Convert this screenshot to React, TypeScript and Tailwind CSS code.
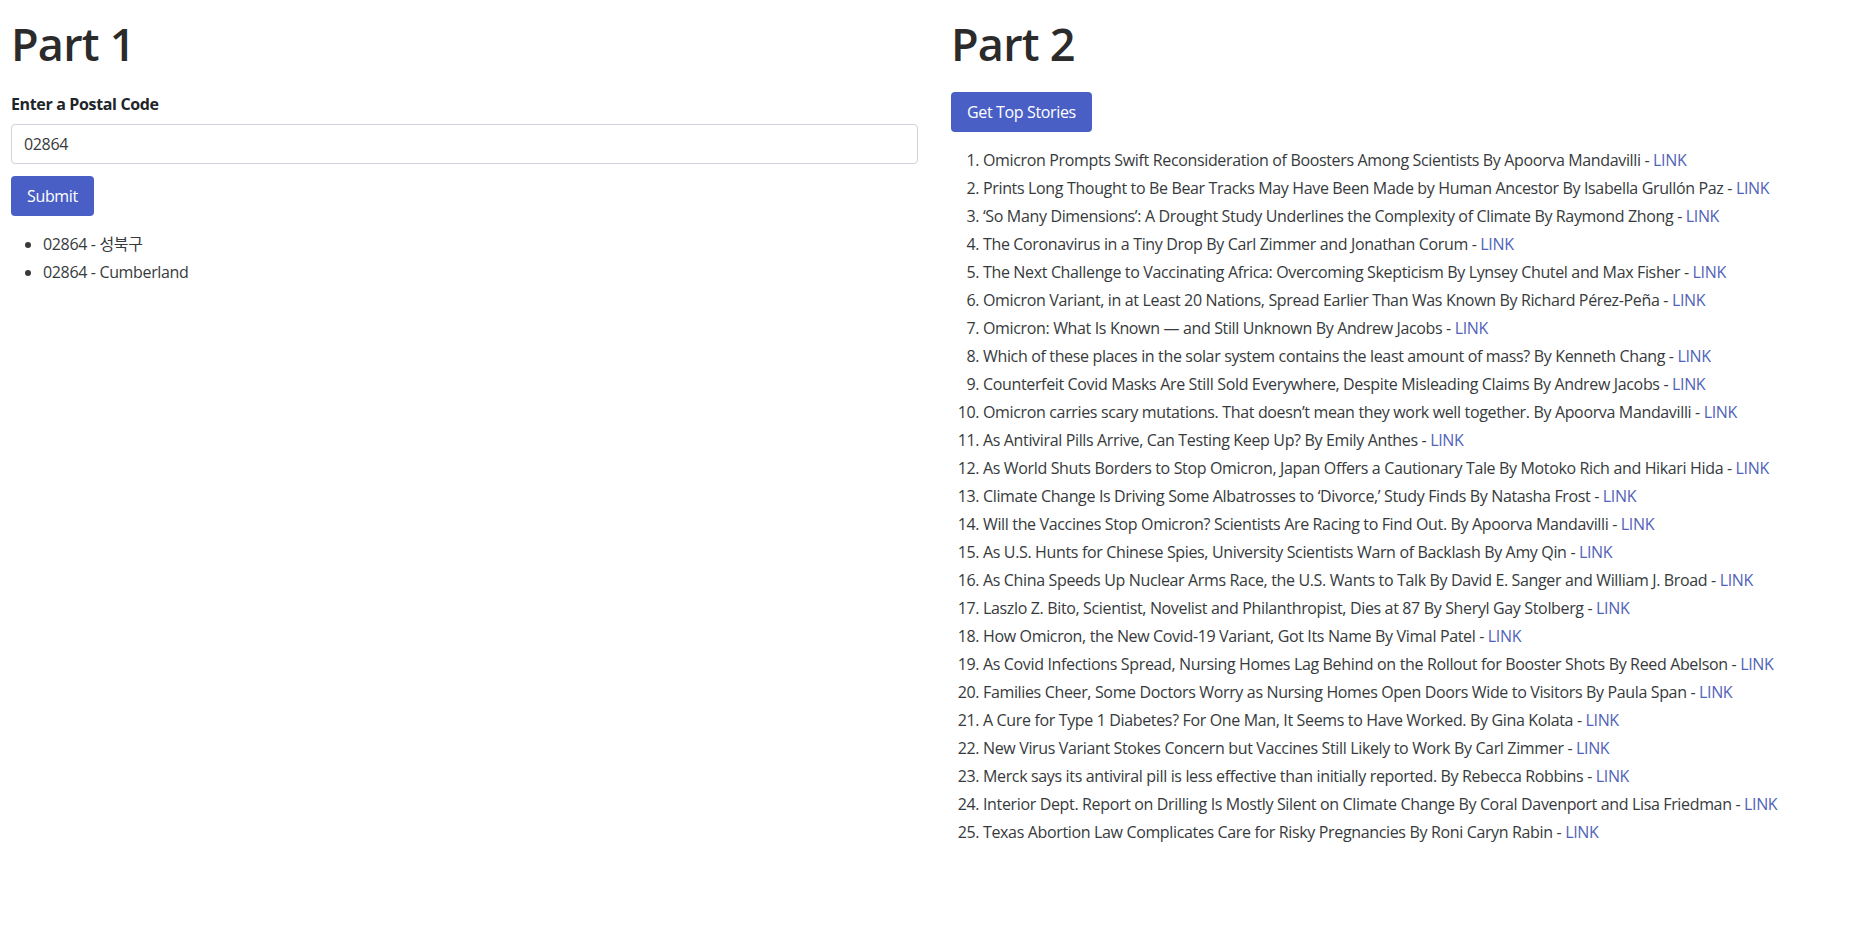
import React from 'react';

const stories = [
  'Omicron Prompts Swift Reconsideration of Boosters Among Scientists By Apoorva Mandavilli',
  'Prints Long Thought to Be Bear Tracks May Have Been Made by Human Ancestor By Isabella Grullón Paz',
  '‘So Many Dimensions’: A Drought Study Underlines the Complexity of Climate By Raymond Zhong',
  'The Coronavirus in a Tiny Drop By Carl Zimmer and Jonathan Corum',
  'The Next Challenge to Vaccinating Africa: Overcoming Skepticism By Lynsey Chutel and Max Fisher',
  'Omicron Variant, in at Least 20 Nations, Spread Earlier Than Was Known By Richard Pérez-Peña',
  'Omicron: What Is Known — and Still Unknown By Andrew Jacobs',
  'Which of these places in the solar system contains the least amount of mass? By Kenneth Chang',
  'Counterfeit Covid Masks Are Still Sold Everywhere, Despite Misleading Claims By Andrew Jacobs',
  'Omicron carries scary mutations. That doesn’t mean they work well together. By Apoorva Mandavilli',
  'As Antiviral Pills Arrive, Can Testing Keep Up? By Emily Anthes',
  'As World Shuts Borders to Stop Omicron, Japan Offers a Cautionary Tale By Motoko Rich and Hikari Hida',
  'Climate Change Is Driving Some Albatrosses to ‘Divorce,’ Study Finds By Natasha Frost',
  'Will the Vaccines Stop Omicron? Scientists Are Racing to Find Out. By Apoorva Mandavilli',
  'As U.S. Hunts for Chinese Spies, University Scientists Warn of Backlash By Amy Qin',
  'As China Speeds Up Nuclear Arms Race, the U.S. Wants to Talk By David E. Sanger and William J. Broad',
  'Laszlo Z. Bito, Scientist, Novelist and Philanthropist, Dies at 87 By Sheryl Gay Stolberg',
  'How Omicron, the New Covid-19 Variant, Got Its Name By Vimal Patel',
  'As Covid Infections Spread, Nursing Homes Lag Behind on the Rollout for Booster Shots By Reed Abelson',
  'Families Cheer, Some Doctors Worry as Nursing Homes Open Doors Wide to Visitors By Paula Span',
  'A Cure for Type 1 Diabetes? For One Man, It Seems to Have Worked. By Gina Kolata',
  'New Virus Variant Stokes Concern but Vaccines Still Likely to Work By Carl Zimmer',
  'Merck says its antiviral pill is less effective than initially reported. By Rebecca Robbins',
  'Interior Dept. Report on Drilling Is Mostly Silent on Climate Change By Coral Davenport and Lisa Friedman',
  'Texas Abortion Law Complicates Care for Risky Pregnancies By Roni Caryn Rabin',
];

const places = ['02864 - 성북구', '02864 - Cumberland'];

const App = () => {
  return (
    <div className="min-h-screen bg-white text-[#373a3c] text-[16px] tracking-[-0.35px] font-['Open_Sans','Noto_Sans_CJK_KR',sans-serif]">
      <div className="grid grid-cols-[907px_1fr] gap-[33px] pl-[11px] pt-[16px]">
        <section>
          <h1 className="text-[45px] leading-[55px] font-semibold tracking-[-0.8px] text-[#2b2b2b] mb-[21px]">Part 1</h1>
          <label className="block font-bold leading-[24px] mb-2 text-[#212529]">Enter a Postal Code</label>
          <input
            className="block w-full h-[40px] px-3 border border-[#ced4da] rounded text-[16px] text-[#373a3c] outline-none"
            defaultValue="02864"
          />
          <button className="mt-3 h-[40px] px-[16px] rounded bg-[#4a5fc6] text-white text-[16px]">Submit</button>
          <ul className="list-disc pl-8 mt-[14px]">
            {places.map((p, i) => (
              <li key={i} className="leading-[28px]">{p}</li>
            ))}
          </ul>
        </section>
        <section>
          <h1 className="text-[45px] leading-[55px] font-semibold tracking-[-0.8px] text-[#2b2b2b] mb-[21px]">Part 2</h1>
          <button className="h-[40px] px-[16px] rounded bg-[#4a5fc6] text-white text-[16px]">Get Top Stories</button>
          <ol className="list-decimal pl-8 mt-[14px]">
            {stories.map((s, i) => (
              <li key={i} className="leading-[28px]">
                {s} - <a href="#" className="text-[#5163b8]">LINK</a>
              </li>
            ))}
          </ol>
        </section>
      </div>
    </div>
  );
};

export default App;
